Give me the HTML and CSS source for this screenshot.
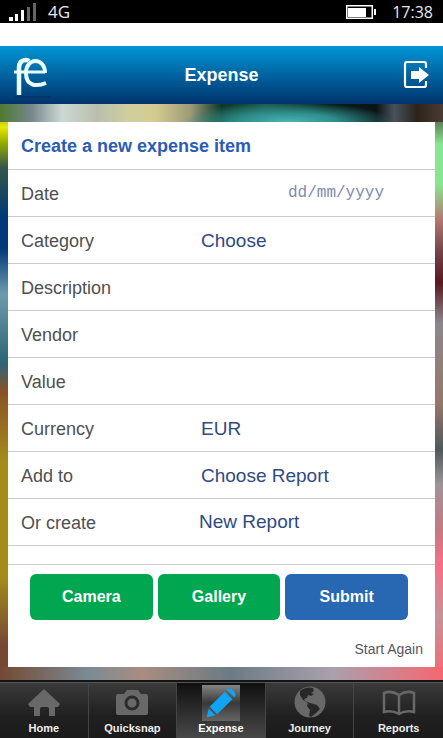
FILE: index.html
```html
<!DOCTYPE html>
<html lang="en">
<head>
<meta charset="utf-8">
<meta name="viewport" content="width=device-width, initial-scale=1">
<title>Expense</title>
<link rel="stylesheet" href="styles.css">
</head>
<body>
<div class="status">
  <div class="status-group">
    <svg class="signal" viewBox="0 0 27 18" aria-hidden="true"><g fill="#fff"><path d="M0 14h4v4H0zM6 11h3v7H6zM12 7h3v11h-3z"/></g><g fill="#666"><path d="M18 4h3v14h-3zM24 0h3v18h-3z"/></g></svg>
    <span>4G</span>
  </div>
  <div class="status-group">
    <svg class="battery" viewBox="0 0 30 14" aria-hidden="true"><path d="M.75 .75h25.5v12.5H.75z" fill="none" stroke="#fff" stroke-width="1.5"/><path d="M2 3h18v9H2zM28 4h2v6h-2z" fill="#fff"/></svg>
    <span>17:38</span>
  </div>
</div>
<header class="header">
  <a class="header-link" href="#home" aria-label="Home">
    <svg class="logo" viewBox="0 0 38 46" fill="none" stroke="#eaffff" aria-hidden="true"><path d="M1 45h36" stroke="#06336a" stroke-width="2"/><path d="M5 43V16Q5 8 12 8Q14 8 15 9" stroke-width="4.5"/><path d="M0 20h31" stroke-width="3"/><path d="M31 21C31 5 12 5 12 21C12 34 22 35 32 31" stroke-width="4"/></svg>
  </a>
  <h1 class="title">Expense</h1>
  <button class="logout" type="button" aria-label="Log out">
    <svg viewBox="0 0 26 30" aria-hidden="true"><path d="M23 8V4Q23 2 21 2H4Q2 2 2 4V25Q2 27 4 27H21Q23 27 23 25V21" fill="none" stroke="#fff" stroke-width="2.2"/><path d="M8 11h8V7l10 8-10 8v-4H8z" fill="#fff"/></svg>
  </button>
</header>
<main class="backdrop">
  <form class="card">
    <h2 class="heading">Create a new expense item</h2>
    <div class="row"><label for="date">Date</label><input class="date" id="date" type="text" placeholder="dd/mm/yyyy"></div>
    <div class="row"><label for="category">Category</label><select id="category"><option>Choose</option></select></div>
    <div class="row"><label for="description">Description</label><input id="description" type="text"></div>
    <div class="row"><label for="vendor">Vendor</label><input id="vendor" type="text"></div>
    <div class="row"><label for="value">Value</label><input id="value" type="text"></div>
    <div class="row"><label for="currency">Currency</label><select id="currency"><option>EUR</option></select></div>
    <div class="row"><label for="report">Add to</label><select id="report"><option>Choose Report</option></select></div>
    <div class="row"><label for="create">Or create</label><input class="create" id="create" type="text" placeholder="New Report"></div>
    <div class="spacer"></div>
    <div class="actions">
      <button type="button">Camera</button>
      <button type="button">Gallery</button>
      <button class="submit" type="submit">Submit</button>
    </div>
    <button class="reset" type="reset">Start Again</button>
  </form>
</main>
<nav class="tabs">
  <a href="#home"><svg viewBox="0 0 36 36" aria-hidden="true"><path fill="#686868" d="M18 4L34 19l-2 3h-3v9h-6v-7q0-2-2-2h-5q-2 0-2 2v7H8V22H4l-2-3z"/></svg>Home</a>
  <a href="#quicksnap"><svg viewBox="0 0 36 36" aria-hidden="true"><path fill="#686868" d="M4 9h6l3-4h11l3 4h5q2 0 2 2v17q0 2-2 2H4q-2 0-2-2V11q0-2 2-2z"/><circle cx="18" cy="18" r="6" fill="#686868" stroke="#2b2b2b" stroke-width="3"/></svg>Quicksnap</a>
  <a class="active" href="#expense" aria-current="page"><svg class="pencil" viewBox="0 0 38 38" aria-hidden="true"><g fill="#12a4f4"><path d="M4 34l2-9 7 7zM7 23L23 7l8 8-16 16zM25 5q3-3 7 1t1 7z"/></g><path d="M6 24l8 8M24 6l8 8" stroke="#595959"/></svg>Expense</a>
  <a href="#journey"><svg viewBox="0 0 36 36" aria-hidden="true"><circle cx="18" cy="17" r="15.5" fill="#686868"/><path fill="#282828" d="M8 6q6-5 13-3l1 3-3 2 3 1-3 2-3-1-1 3-3 1 1 2 5 2 7 2 3 4-4 4-5 4-2-1 1-6-3-4 1-3-5-3-3-5z"/></svg>Journey</a>
  <a href="#reports"><svg viewBox="0 0 36 36" aria-hidden="true"><path d="M18 10Q10 5 3 8v19q8-2 15 2 7-4 15-2V8q-7-3-15 2zv19" fill="none" stroke="#686868" stroke-width="2.5"/></svg>Reports</a>
</nav>
</body>
</html>
```
FILE: styles.css
```css
* { box-sizing: border-box; }
body {
  margin: 0;
  min-height: 100vh;
  display: flex;
  flex-direction: column;
  background: #fff;
  font-family: "Liberation Sans", Arial, sans-serif;
  color: #4f4f51;
}
button, input, select { font: inherit; border: 0; margin: 0; padding: 0; background: none; }

.status {
  height: 23px;
  padding: 0 10px 0 9px;
  display: flex;
  align-items: center;
  justify-content: space-between;
  background: #000;
  color: #e8e8e8;
  font: 500 17px/24px "Open Sans", sans-serif;
}
.status-group { display: flex; align-items: center; gap: 12px; }
.status-group:last-child { gap: 16px; font-size: 16px; }
.signal { width: 27px; height: 18px; }
.battery { width: 30px; height: 14px; }

.header {
  height: 58px;
  margin-top: 23px;
  padding: 0 14px;
  display: grid;
  grid-template-columns: 38px 1fr 38px;
  align-items: center;
  background: linear-gradient(#0095d5, #00336c);
  color: #fff;
}
.header-link, .header svg { display: block; }
.logo { width: 38px; height: 46px; }
.title { margin: 0; font-size: 18px; text-align: center; }
.logout { justify-self: end; }
.logout svg { width: 26px; height: 30px; }

.backdrop {
  flex: 1;
  padding: 18px 8px 13px;
  background:
    linear-gradient(90deg, #754834, #7b8b95 20%, #a98c80 32%, #6b7b85 52%, #aaa0ad 75%, #f66772) bottom / 100% 13px no-repeat,
    radial-gradient(24% 20px at 65% 18px, #48b4b6, #2f8f8d 45%, transparent) top / 100% 18px no-repeat,
    linear-gradient(90deg, #4e7a30, #75868c 7%, #cdd8d4 14%, #b9bfae 22%, #cfcf9e 29%, #d5cb90 35%, #9b9b78 43%, #0d3524 50%, #1a5548 60%, #061c18 74%, #0c1416 85%, #47535b 89%, #2c231c 94%, #4b3c34) top / 100% 18px no-repeat,
    linear-gradient(#60733a, #e8e800 4%, #8da800 7%, #35564a 11%, #003878 20%, #003878 25%, #6b9cac 33%, #2c6578 45%, #8a5127 50%, #a48c18 62%, #a48c18 82%, #754834 94%) left / 50% 100% no-repeat,
    linear-gradient(#3a3029, #89e690 7%, #89e690 14%, #b47870 20%, #704048 26%, #5b1821 31%, #8b868d 38%, #94786a 52%, #50585d 60%, #9c9496 66%, #c67982 74%, #f66f88 80%, #c69298 89%, #f66772) right / 50% 100% no-repeat;
}
.card { background: #fff; font-size: 19px; }
.heading {
  height: 48px;
  margin: 0;
  padding: 0 13px;
  font-size: 18px;
  line-height: 48px;
  color: #2b5cb5;
  border-bottom: 1px solid #cacaca;
}
.row {
  height: 47px;
  padding: 0 13px;
  display: grid;
  grid-template-columns: 178px 1fr;
  align-items: center;
  border-bottom: 1px solid #cacaca;
}
.row label { font-size: 18px; line-height: 22px; padding-top: 2px; }
.row input, .row select {
  width: 100%;
  min-width: 0;
  height: 32px;
  padding-left: 2px;
  color: #2f4a82;
  appearance: none;
}
.row .create { padding-left: 0; }
.row input::placeholder { color: inherit; opacity: 1; }
.row .date {
  padding-right: 38px;
  font: 16px "Liberation Mono", monospace;
  text-align: right;
  color: #7d8bae;
}
.spacer { height: 19px; border-bottom: 1px solid #cacaca; }
.actions {
  padding: 9px 27px 0 22px;
  display: grid;
  grid-template-columns: repeat(3, 1fr);
  gap: 5px;
}
.actions button {
  height: 46px;
  border-radius: 6px;
  background: #00a650;
  color: #fff;
  font-size: 16px;
  font-weight: bold;
}
.actions .submit { background: #2867b2; }
.reset {
  display: block;
  margin: 18px 12px 0 auto;
  padding-bottom: 7px;
  font-size: 14px;
  line-height: 22px;
  color: #58585a;
}

.tabs {
  height: 58px;
  display: grid;
  grid-template-columns: repeat(5, 1fr);
  border-top: 2px solid #151515;
  background: linear-gradient(#3b3b3b, #202020 60%, #1b1b1b);
}
.tabs a {
  display: flex;
  flex-direction: column;
  align-items: center;
  padding-top: 2px;
  border-right: 1px solid #454545;
  border-top: 1px solid #555;
  color: #eee;
  font-size: 11px;
  font-weight: bold;
  line-height: 14px;
  text-decoration: none;
}
.tabs a:last-child { border-right: 0; }
.tabs svg { width: 36px; height: 36px; }
.tabs .active { background: linear-gradient(#101010, #484848); color: #fff; }
.tabs .pencil { width: 38px; background: linear-gradient(#858585, #393939 50%, #656565); }
```
